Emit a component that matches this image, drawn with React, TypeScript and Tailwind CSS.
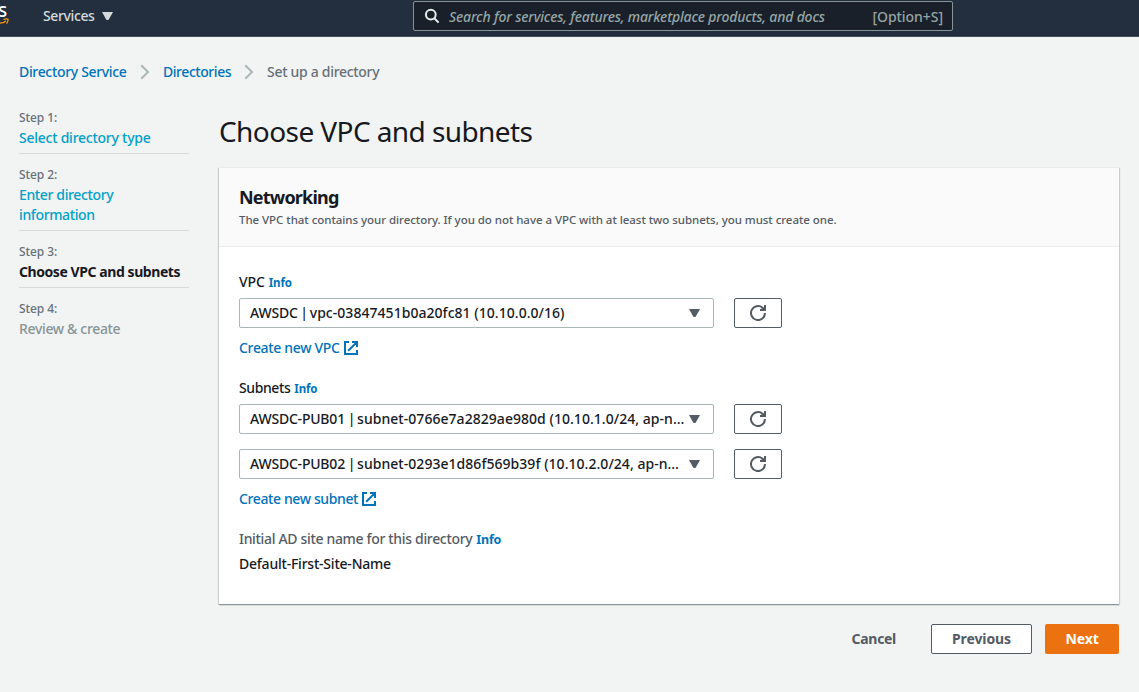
import React from "react";

function Caret({ className }: { className: string }) {
  return (
    <svg viewBox="0 0 10 8" className={className} fill="currentColor" preserveAspectRatio="none">
      <path d="M0 0h10L6.2 7.4Q5 8.6 3.8 7.4Z" />
    </svg>
  );
}

function Chevron() {
  return (
    <svg viewBox="0 0 10 16" className="h-4 w-2.5 text-[#aab7b8]" fill="none" stroke="currentColor" strokeWidth="2">
      <path d="M1.2 1.2 8 8 1.2 14.8" />
    </svg>
  );
}

function External() {
  return (
    <svg viewBox="0 0 16 16" className="h-4 w-4 shrink-0" fill="none" stroke="currentColor" strokeWidth="2">
      <path d="M6 2H2v12h12V10M9 2h5v5M5.2 10.8 13.6 2.4" />
    </svg>
  );
}

function Refresh() {
  return (
    <button className="flex h-[30px] w-12 items-center justify-center rounded-[2px] border border-[#545b64] bg-white text-[#545b64]">
      <svg viewBox="0 0 16 16" className="h-4 w-4" fill="none" stroke="currentColor" strokeWidth="2">
        <path d="M10 5h5V0M15 8A7 7 0 1 1 12.6 2.8L14.6 4.8" />
        <path d="M12 2.4 15 5h-4Z" fill="currentColor" stroke="none" />
      </svg>
    </button>
  );
}

function Select({ name, value }: { name: string; value: string }) {
  return (
    <div className="flex gap-5">
      <div className="flex h-[30px] w-[475px] items-center justify-between rounded-[2px] border border-[#aab7b8] bg-white pr-[13px] pl-2.5 text-[#16191f]">
        <span>
          <span className="tracking-[-0.2px]">{name}</span>
          <span className="-mr-[1.4px] -ml-[0.6px]"> | </span>
          <span className="tracking-[0.04px]">{value}</span>
        </span>
        <Caret className="h-2 w-[11px] text-[#545b64]" />
      </div>
      <Refresh />
    </div>
  );
}

function Step({ label, children, className }: { label: string; children: React.ReactNode; className: string }) {
  return (
    <li className="mb-[11px] border-b border-[#d5dbdb] pb-[5px] last:border-0">
      <div className="text-xs leading-5 tracking-[-0.1px] text-[#687078]">{label}</div>
      <div className={className}>{children}</div>
    </li>
  );
}

export default function App() {
  return (
    <div className="h-[692px] w-[1139px] overflow-hidden bg-[#f2f3f3] font-['Noto_Sans',sans-serif] text-sm leading-5 font-medium tracking-[-0.3px] whitespace-nowrap text-[#16191f]">
      <header className="flex h-[37px] items-start border-b border-[#414d5c] bg-[#232f3e]">
        <div className="flex h-9 w-[43px] flex-col overflow-hidden">
          <span className="-ml-[2px] h-[18px] text-[19px] leading-[21px] font-medium text-white">s</span>
          <svg viewBox="0 0 10 8" className="h-2 w-2.5" fill="none" stroke="#ff9900" strokeWidth="1.3">
            <path d="M0 5.2Q3.5 4.9 6 2.9M3.4 1.5Q7 .3 8 1.2Q8.5 2.7 6.6 5.7" />
          </svg>
        </div>
        <div className="flex h-8 w-[370px] items-center text-[#d5dbdb]">
          <span className="w-[59px] tracking-[-0.38px]">Services</span>
          <Caret className="h-2 w-[11px]" />
        </div>
        <div className="mt-px flex h-[30px] w-[540px] items-center rounded-[2px] border border-[#879596] bg-[#1a2029] pr-[9px] pl-2.5 text-[#95a5a6]">
          <svg viewBox="0 0 16 16" className="mr-[9px] h-4 w-4 text-[#eaeded]" fill="none" stroke="currentColor" strokeWidth="2">
            <circle cx="6.8" cy="6.6" r="4.9" />
            <path d="m10.3 10.2 4.3 4.4" />
          </svg>
          <span className="pt-px tracking-[-0.18px] italic">Search for services, features, marketplace products, and docs</span>
          <span className="ml-auto pt-px tracking-[-0.05px]">[Option+S]</span>
        </div>
      </header>

      <nav className="mt-[25px] ml-[19px] flex h-5 items-center text-[#0073bb]">
        <span className="w-[121px] tracking-[-0.33px]">Directory Service</span>
        <Chevron />
        <span className="ml-[13px] w-[81px] tracking-[-0.45px]">Directories</span>
        <Chevron />
        <span className="ml-[13px] text-[#687078]">Set up a directory</span>
      </nav>

      <div className="ml-[19px] flex pt-[26px]">
        <ul className="w-[170px]">
          <Step label="Step 1:" className="tracking-[-0.25px] text-[#00a1c9]">Select directory type</Step>
          <Step label="Step 2:" className="tracking-[-0.37px] text-[#00a1c9]">Enter directory<br />information</Step>
          <Step label="Step 3:" className="font-bold tracking-[-0.43px]">Choose VPC and subnets</Step>
          <Step label="Step 4:" className="tracking-[-0.34px] text-[#879596]">Review &amp; create</Step>
        </ul>

        <main className="ml-[30px] w-[900px]">
          <h1 className="mt-[5px] h-9 text-[28px] leading-9 font-normal tracking-[-0.58px]">Choose VPC and subnets</h1>
          <section className="mt-[18px] h-[437px] bg-white shadow-[0_1px_1px_0_#879596,1px_1px_1px_0_#d5dbdb,-1px_1px_1px_0_#d5dbdb]">
            <div className="h-20 border-t border-b border-[#eaeded] bg-[#fafafa] pt-[18px] pl-5">
              <h2 className="text-lg leading-[22px] font-bold tracking-[-0.8px]">Networking</h2>
              <p className="text-[11.5px] leading-6 tracking-[-0.045px] text-[#545b64]">The VPC that contains your directory. If you do not have a VPC with at least two subnets, you must create one.</p>
            </div>
            <div className="flex flex-col pt-[25px] pl-5">
              <div className="mb-[6px] flex h-5 gap-1">
                <span className="tracking-[-0.1px]">VPC</span>
                <b className="text-[11.5px] leading-[22px] tracking-[-0.15px] text-[#0073bb]">Info</b>
              </div>
              <Select name="AWSDC" value="vpc-03847451b0a20fc81 (10.10.0.0/16)" />
              <a className="mt-[10px] flex items-center gap-[3px] text-[#0073bb]"><span className="tracking-[-0.32px]">Create new VPC</span><External /></a>
              <div className="mt-5 mb-[6px] flex h-5 gap-1">
                <span className="tracking-[-0.4px]">Subnets</span>
                <b className="text-[11.5px] leading-[22px] tracking-[-0.15px] text-[#0073bb]">Info</b>
              </div>
              <Select name="AWSDC-PUB01" value="subnet-0766e7a2829ae980d (10.10.1.0/24, ap-n…" />
              <div className="h-[15px]" />
              <Select name="AWSDC-PUB02" value="subnet-0293e1d86f569b39f (10.10.2.0/24, ap-n…" />
              <a className="mt-[10px] flex items-center gap-[3px] text-[#0073bb]"><span className="tracking-[-0.38px]">Create new subnet</span><External /></a>
              <div className="mt-5 flex h-5 gap-1 text-[#545b64]">
                <span className="tracking-[-0.33px]">Initial AD site name for this directory</span>
                <b className="text-[12.5px] leading-[21px] tracking-[-0.2px] text-[#0073bb]">Info</b>
              </div>
              <div className="mt-[5px]"><span className="tracking-[-0.22px]">Default-First-Site-Name</span></div>
            </div>
          </section>
          <div className="mt-5 flex items-center justify-end tracking-normal text-[#545b64]">
            <button className="mr-[35px] font-bold tracking-[-0.3px]">Cancel</button>
            <button className="mr-[13px] h-[30px] w-[101px] rounded-[2px] border border-[#545b64] bg-white font-bold tracking-[-0.1px]">Previous</button>
            <button className="h-[30px] w-[74px] rounded-[2px] bg-[#ec7211] font-bold tracking-[-0.1px] text-white">Next</button>
          </div>
        </main>
      </div>
    </div>
  );
}
